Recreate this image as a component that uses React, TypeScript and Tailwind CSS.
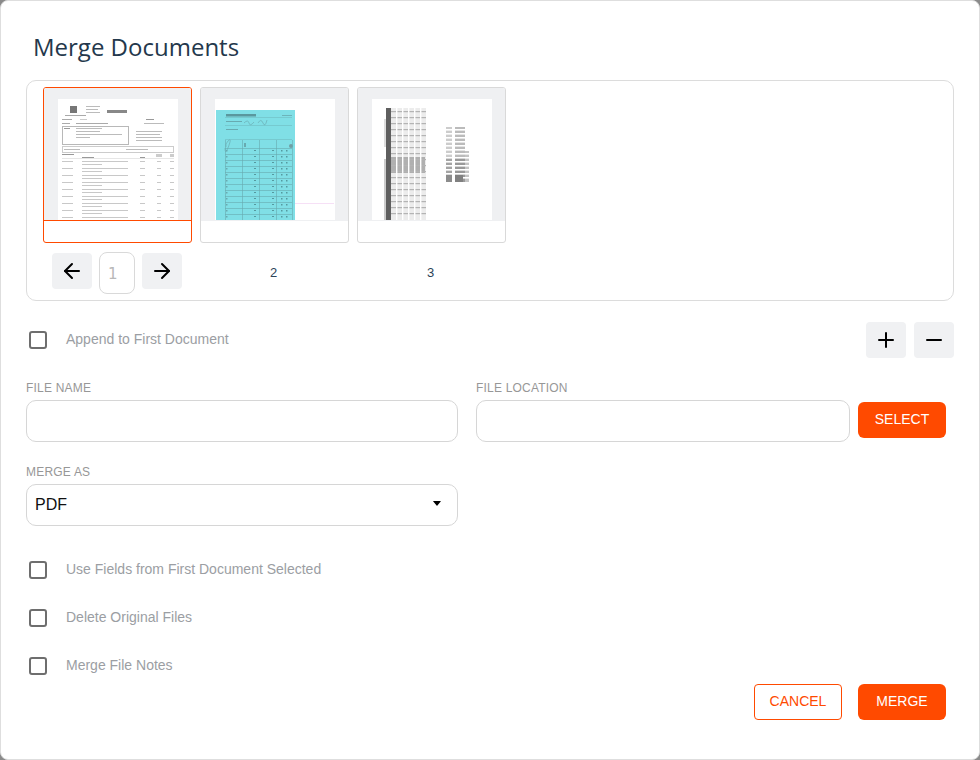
import { ArrowLeft, ArrowRight, Minus, Plus } from "lucide-react"

const slipRows = [62, 69, 76, 83, 90, 97, 104, 111, 118]
const cyanRows = [49, 55, 61, 67, 73, 79, 85, 91, 97, 103, 109, 115]
const scanRows = [12, 18, 24, 30, 36, 42, 48, 54, 60, 66, 72, 78, 84, 90, 96, 102, 108, 114]
const noteRows = [30, 34, 38, 42, 46, 50, 54, 58, 62, 66, 70, 74, 78]

function PackingSlip() {
  return (
    <svg viewBox="0 0 120 121" className="h-[121px] w-[120px] blur-[0.7px]">
      <rect width="120" height="121" fill="#fff" />
      <rect x="12" y="7" width="7" height="7" fill="#777" />
      <rect x="7" y="16" width="21" height="1" fill="#aaa" />
      <rect x="28" y="7" width="14" height="1" fill="#bbb" />
      <rect x="28" y="10" width="12" height="1" fill="#bbb" />
      <rect x="28" y="13" width="14" height="1" fill="#bbb" />
      <rect x="49" y="11" width="20" height="3" fill="#888" />
      <rect x="4" y="20" width="10" height="1" fill="#aaa" />
      <rect x="22" y="20" width="7" height="1" fill="#ccc" />
      <rect x="88" y="20" width="8" height="1" fill="#999" />
      <rect x="4" y="24" width="8" height="1" fill="#aaa" />
      <rect x="18" y="24" width="32" height="1" fill="#aaa" />
      <rect x="86" y="24" width="20" height="1" fill="#bbb" />
      <rect x="4.5" y="27.5" width="66" height="18" fill="none" stroke="#b8b8b8" />
      <rect x="6" y="29" width="6" height="1" fill="#999" />
      <rect x="18" y="29" width="26" height="1" fill="#bbb" />
      <rect x="18" y="32" width="24" height="1" fill="#bbb" />
      <rect x="18" y="35" width="46" height="1" fill="#bbb" />
      <rect x="18" y="38" width="14" height="1" fill="#bbb" />
      <rect x="78" y="32" width="26" height="1" fill="#bbb" />
      <rect x="78" y="35" width="24" height="1" fill="#bbb" />
      <rect x="78" y="38" width="26" height="1" fill="#bbb" />
      <rect x="78" y="41" width="26" height="1" fill="#bbb" />
      <rect x="4.5" y="47.5" width="111" height="6" fill="none" stroke="#ccc" />
      <rect x="6" y="50" width="16" height="1" fill="#bbb" />
      <rect x="68" y="50" width="22" height="1" fill="#bbb" />
      <rect x="4" y="55" width="12" height="1" fill="#999" />
      <rect x="24" y="58" width="12" height="1" fill="#999" />
      <rect x="82" y="58" width="5" height="1" fill="#999" />
      <rect x="98" y="55" width="6" height="3" fill="#ccc" />
      <rect x="112" y="55" width="4" height="3" fill="#ccc" />
      <rect x="4" y="59.5" width="112" height="0.5" fill="#ccc" />
      {slipRows.map((y) => (
        <g key={y} fill="#bbb">
          <rect x="4" y={y} width="11" height="0.8" />
          <rect x="24" y={y} width="46" height="0.8" />
          <rect x="24" y={y + 3} width="20" height="0.8" />
          <rect x="82" y={y} width="5" height="0.8" />
          <rect x="99" y={y} width="4" height="0.8" />
          <rect x="112" y={y} width="4" height="0.8" />
        </g>
      ))}
    </svg>
  )
}

function TallySheet() {
  return (
    <svg viewBox="0 0 120 121" className="h-[121px] w-[120px] blur-[0.7px]">
      <rect width="120" height="121" fill="#fff" />
      <rect x="79" y="104" width="40" height="1" fill="#f6e0f6" />
      <rect x="1" y="11" width="79" height="110" fill="#80dfe6" />
      <rect x="11" y="15" width="30" height="2.5" fill="#5a989e" />
      <rect x="67" y="16" width="10" height="1" fill="#6db4ba" />
      <rect x="10" y="18.5" width="67" height="0.5" fill="#6db4ba" />
      <rect x="11" y="22" width="16" height="1" fill="#68aab0" />
      <path d="M29 24q4-4 5 0t5-1M43 24q3-5 5 0t4-3" stroke="#6db4ba" strokeWidth="0.8" fill="none" />
      <rect x="10" y="26.5" width="67" height="0.5" fill="#6db4ba" />
      <rect x="11" y="30" width="12" height="1" fill="#68aab0" />
      <rect x="10" y="40" width="67" height="0.5" fill="#6db4ba" />
      <path d="M11 48q-1-3 2-6t2 1-3 8-2-2" stroke="#6db4ba" strokeWidth="0.8" fill="none" />
      <circle cx="76" cy="47" r="2" fill="#6f9fa4" />
      <rect x="29" y="44" width="2" height="4" fill="#68aab0" />
      {[10, 27, 44, 61, 77].map((x) => (
        <rect key={x} x={x} y="41" width="0.6" height="80" fill="#68aab0" />
      ))}
      {cyanRows.map((y) => (
        <g key={y}>
          <rect x="10" y={y} width="67" height="0.6" fill="#68aab0" />
          <rect x="39" y={y + 2} width="2" height="1" fill="#55999f" />
          <rect x="57" y={y + 2} width="2" height="1" fill="#55999f" />
          <rect x="66" y={y + 2} width="1.5" height="1.5" fill="#55999f" />
          <rect x="71" y={y + 2} width="1.5" height="1.5" fill="#55999f" />
          <rect x="11" y={y + 2} width="1.5" height="1.5" fill="#68aab0" />
        </g>
      ))}
    </svg>
  )
}

function RotatedScan() {
  return (
    <svg viewBox="0 0 120 121" className="h-[121px] w-[120px] blur-[0.7px]">
      <rect width="120" height="121" fill="#fff" />
      <rect x="12" y="20" width="2" height="28" fill="#ddd" />
      <rect x="12" y="60" width="2" height="61" fill="#ccc" />
      <rect x="14" y="9" width="40" height="112" fill="#ececec" />
      <rect x="14" y="9" width="5" height="112" fill="#5f5f5f" />
      <rect x="19" y="58" width="34" height="16" fill="#b0b0b0" />
      {scanRows.map((y) => (
        <rect key={y} x="19" y={y} width="35" height="1.2" fill="#b4b4b4" />
      ))}
      {[24, 30, 36, 42, 48].map((x) => (
        <rect key={x} x={x} y="9" width="1.4" height="112" fill="#fff" />
      ))}
      <rect x="74" y="28" width="6" height="55" fill="#ccc" />
      <rect x="83" y="28" width="10" height="55" fill="#bbb" />
      <rect x="93" y="52" width="4" height="31" fill="#c4c4c4" />
      <rect x="74" y="58" width="6" height="25" fill="#a4a4a4" />
      <rect x="83" y="58" width="10" height="25" fill="#999" />
      {noteRows.map((y) => (
        <rect key={y} x="73" y={y} width="25" height="1.6" fill="#fff" />
      ))}
      <rect x="74" y="76" width="6" height="7" fill="#8c8c8c" />
      <rect x="83" y="76" width="8" height="7" fill="#808080" />
    </svg>
  )
}

function Thumb({ selected, children }: { selected?: boolean; children: React.ReactNode }) {
  return (
    <div
      className={`h-[156px] w-[149px] overflow-hidden rounded-[3px] border ${
        selected ? "border-[#ff4a00]" : "border-[#d9d9d9]"
      }`}
    >
      <div
        className={`flex h-[133px] justify-center overflow-hidden bg-[#eff0f2] pt-[11px] ${
          selected ? "border-b border-[#ff4a00]" : ""
        }`}
      >
        {children}
      </div>
    </div>
  )
}

function CheckRow({ label }: { label: string }) {
  return (
    <label className="flex h-[18px] items-center pl-[3px]">
      <span className="mt-[2px] h-[18px] w-[18px] shrink-0 rounded-[3px] border-2 border-[#6e6e6e]" />
      <span className="ml-[19px] text-[14px] text-[#9b9ea3]">{label}</span>
    </label>
  )
}

function SquareButton({ children }: { children: React.ReactNode }) {
  return (
    <button className="flex h-9 w-10 items-center justify-center rounded-[4px] bg-[#f0f1f3] text-black">
      {children}
    </button>
  )
}

export default function App() {
  return (
    <div className="h-[760px] w-[980px] bg-[#8a8a8a] font-['Liberation_Sans',sans-serif]">
      <div className="h-full w-full rounded-[8px] border border-[#dedede] bg-white pl-[25px] pr-[25px]">
        <h1 className="pl-[7px] pt-[30px] font-['Open_Sans',sans-serif] text-[24px] leading-[32px] text-[#24384c]">
          Merge Documents
        </h1>

        <div className="mt-[17px] h-[221px] rounded-[10px] border border-[#dcdcdc] pl-[16px] pt-[6px]">
          <div className="flex gap-2">
            <Thumb selected>
              <PackingSlip />
            </Thumb>
            <Thumb>
              <TallySheet />
            </Thumb>
            <Thumb>
              <RotatedScan />
            </Thumb>
          </div>
          <div className="mt-[9px] flex items-start">
            <div className="flex w-[157px] items-start gap-[7px] pl-[9px]">
              <div className="pt-px">
                <SquareButton>
                  <ArrowLeft size={24} />
                </SquareButton>
              </div>
              <div className="flex h-[42px] w-9 shrink-0 items-center rounded-[8px] border border-[#d9d9d9] pl-[8px] pt-[2px] font-['DejaVu_Sans',sans-serif] text-[15px] text-[#b8b8b8]">
                1
              </div>
              <div className="pt-px">
                <SquareButton>
                  <ArrowRight size={24} />
                </SquareButton>
              </div>
            </div>
            <span className="mt-[12px] w-[157px] pl-[70px] text-[13px] leading-[18px] text-[#2d4358]">2</span>
            <span className="mt-[12px] pl-[70px] text-[13px] leading-[18px] text-[#2d4358]">3</span>
          </div>
        </div>

        <div className="mt-[21px] flex h-9 items-center justify-between">
          <div className="mb-[2px]">
            <CheckRow label="Append to First Document" />
          </div>
          <div className="flex gap-2">
            <SquareButton>
              <Plus size={24} />
            </SquareButton>
            <SquareButton>
              <Minus size={24} />
            </SquareButton>
          </div>
        </div>

        <div className="mt-[20px] flex">
          <div className="w-[432px]">
            <div className="text-[12px] leading-[20px] tracking-[0.2px] text-[#979797]">FILE NAME</div>
            <input className="mt-[2px] h-[42px] w-full rounded-[10px] border border-[#d6d6d6]" />
          </div>
          <div className="ml-[18px] w-[374px]">
            <div className="text-[12px] leading-[20px] tracking-[0.2px] text-[#979797]">FILE LOCATION</div>
            <input className="mt-[2px] h-[42px] w-full rounded-[10px] border border-[#d6d6d6]" />
          </div>
          <button className="ml-2 mt-[24px] h-9 w-[88px] rounded-[6px] bg-[#ff4a00] pb-[2px] text-[14px] text-white">
            SELECT
          </button>
        </div>

        <div className="mt-[20px] w-[432px]">
          <div className="text-[12px] leading-[20px] tracking-[0.2px] text-[#979797]">MERGE AS</div>
          <div className="mt-[2px] flex h-[42px] items-center justify-between rounded-[10px] border border-[#d6d6d6] pl-2 pr-4">
            <span className="text-[16px] text-[#111]">PDF</span>
            <svg viewBox="0 0 8 5" className="mb-[3px] h-[5px] w-2">
              <path d="M0 .5Q0 0 .5 0h7q.5 0 .2.5L4.4 4.6q-.4.4-.8 0L.3.5z" fill="#000" />
            </svg>
          </div>
        </div>

        <div className="mt-[34px] flex flex-col gap-[30px]">
          <CheckRow label="Use Fields from First Document Selected" />
          <CheckRow label="Delete Original Files" />
          <CheckRow label="Merge File Notes" />
        </div>

        <div className="mt-[10px] flex justify-end gap-4 pr-2">
          <button className="h-9 w-[88px] rounded-[4px] border border-[#ff4a00] bg-white pb-[2px] text-[14px] text-[#ff4a00]">
            CANCEL
          </button>
          <button className="h-9 w-[88px] rounded-[6px] bg-[#ff4a00] pb-[2px] text-[14px] text-white">MERGE</button>
        </div>
      </div>
    </div>
  )
}
